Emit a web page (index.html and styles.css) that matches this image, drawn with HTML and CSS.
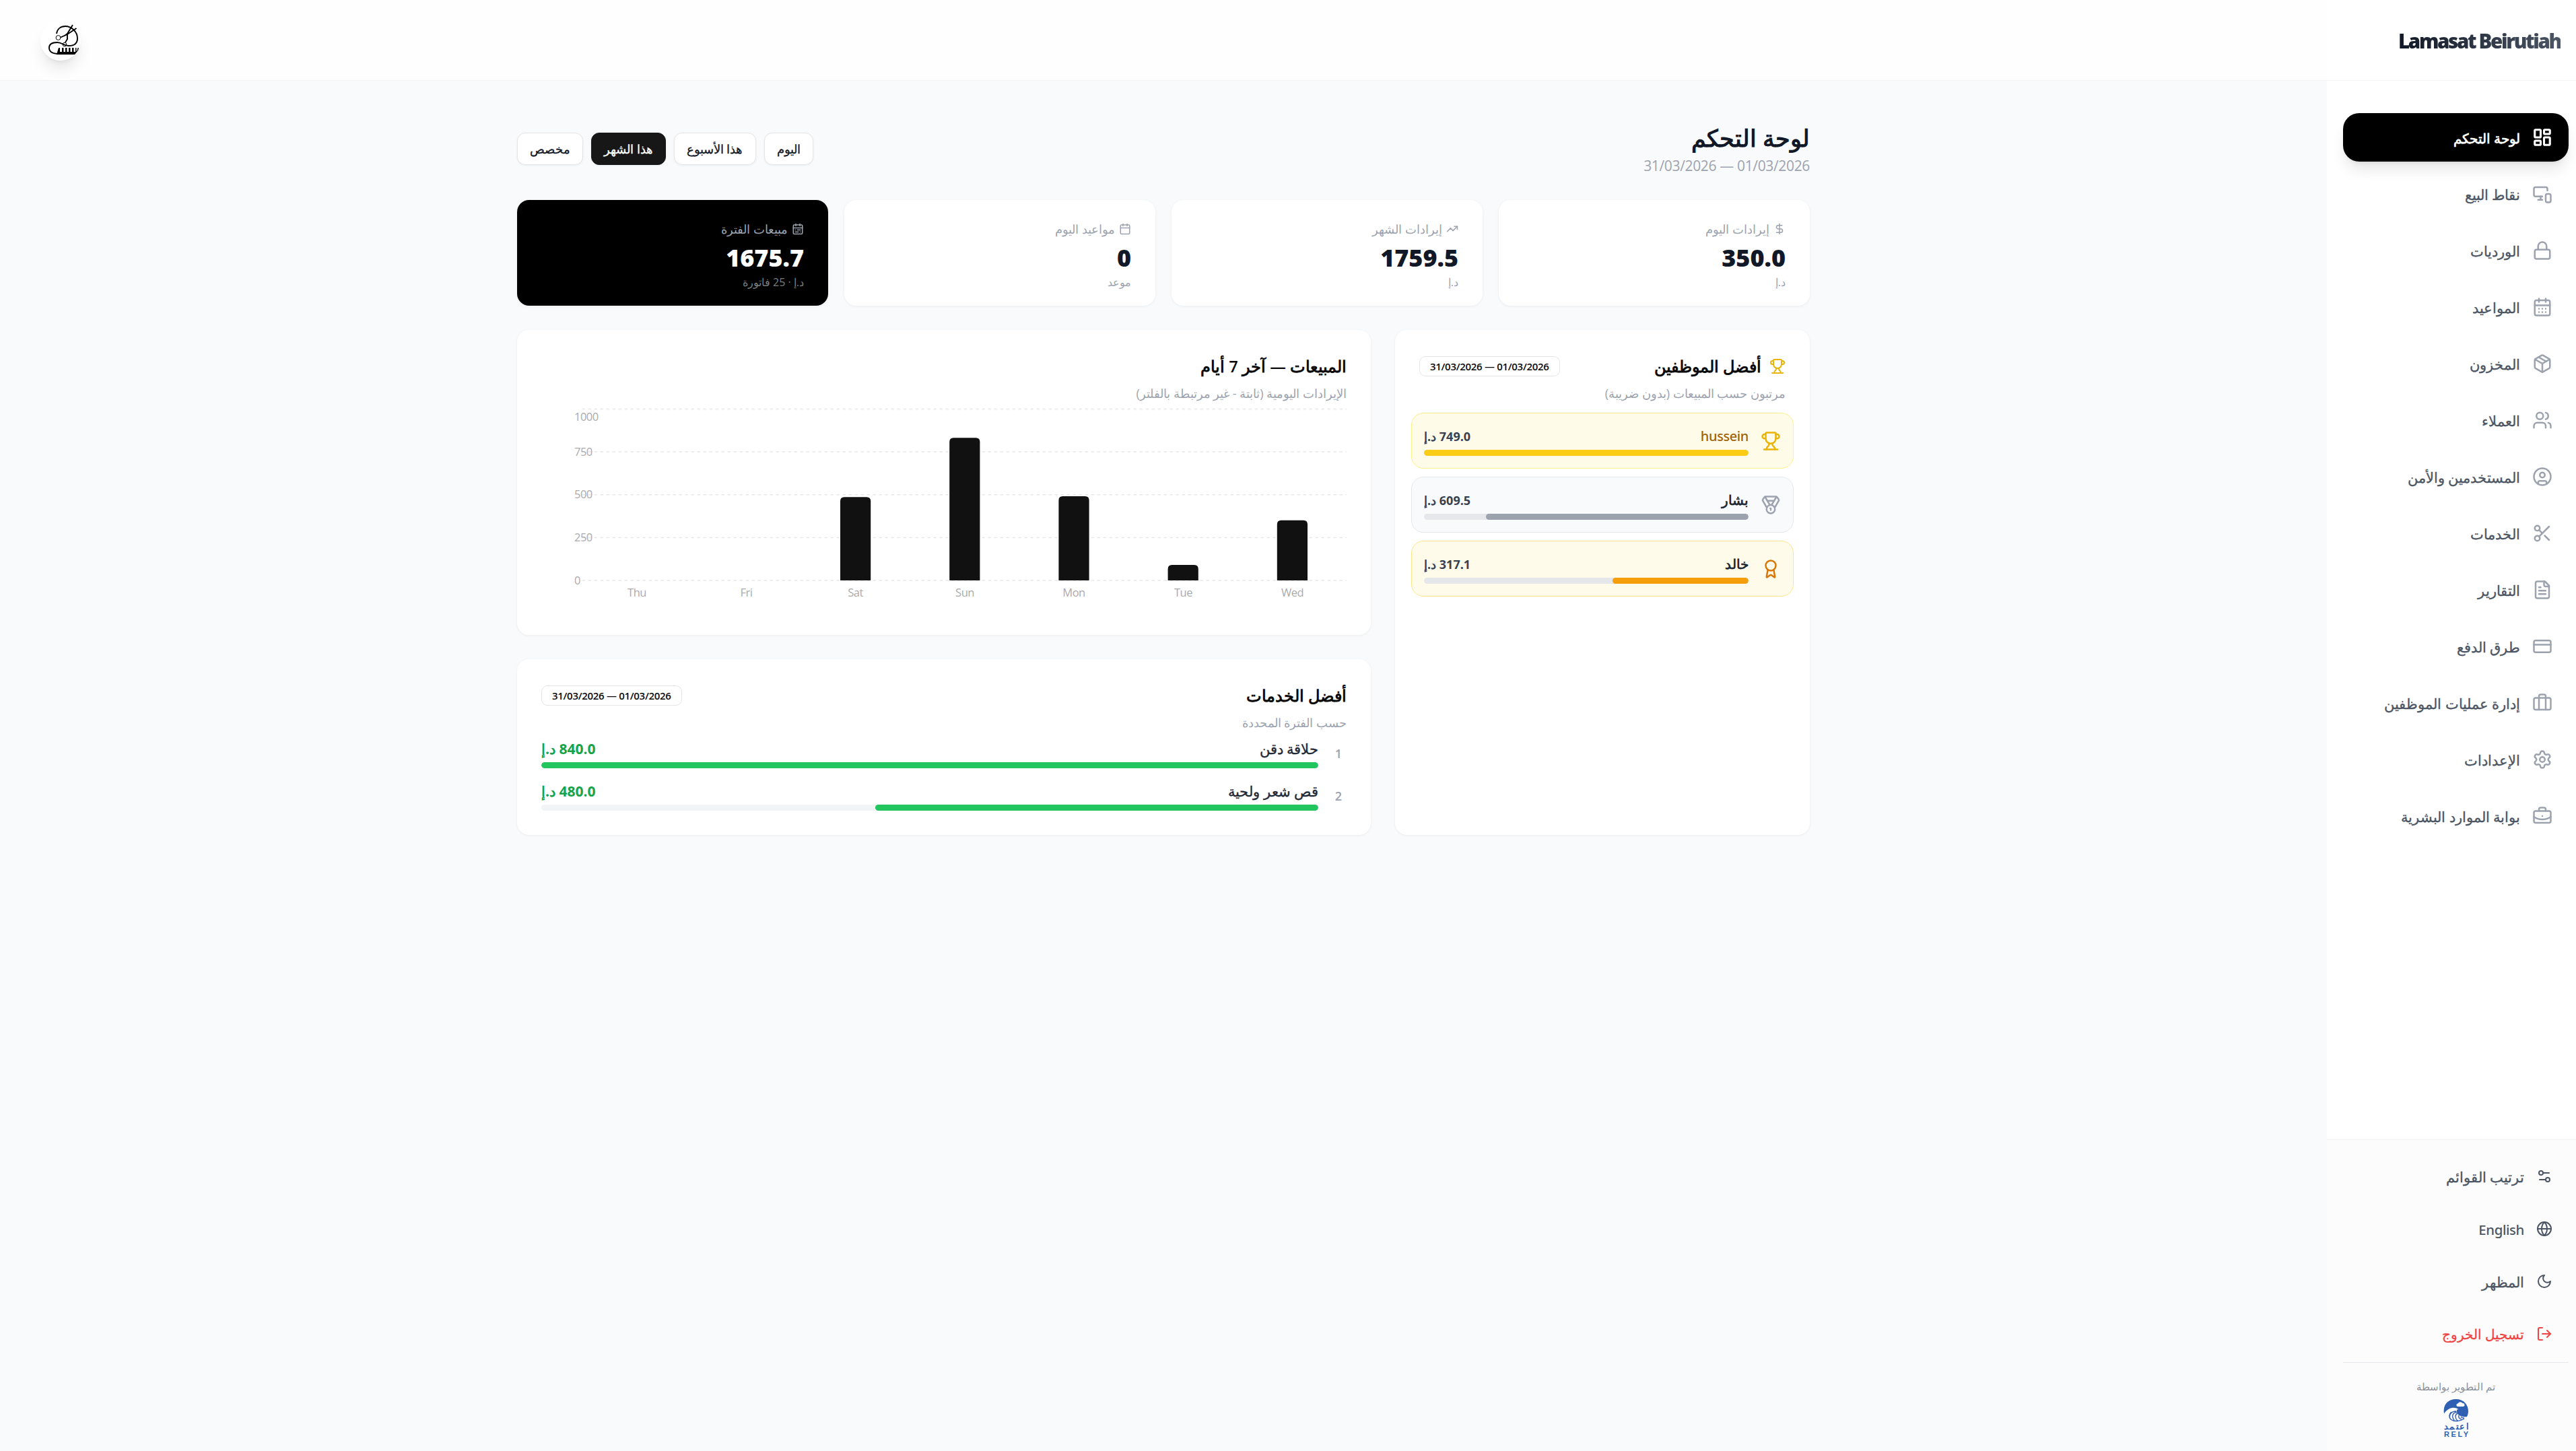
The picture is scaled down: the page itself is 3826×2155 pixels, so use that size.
FILE: index.html
```html
<!DOCTYPE html>
<html lang="ar" dir="rtl">
<head>
    <meta charset="UTF-8">
    <meta name="viewport" content="width=device-width, initial-scale=1.0">
    <title>Lamasat Beirutiah</title>
    <link rel="stylesheet" href="styles.css">
</head>
<body>
    <aside class="sidebar">
        <div class="brand"><span class="brand-name" dir="ltr">Lamasat Beirutiah</span></div>

        <nav class="nav">
            <a class="nav-item active">
                <svg class="icon" viewBox="0 0 24 24"><rect width="7" height="9" x="3" y="3" rx="1"/><rect width="7" height="5" x="14" y="3" rx="1"/><rect width="7" height="9" x="14" y="12" rx="1"/><rect width="7" height="5" x="3" y="16" rx="1"/></svg>
                <span>لوحة التحكم</span>
            </a>
            <a class="nav-item">
                <svg class="icon" viewBox="0 0 24 24"><path d="M18 8V6a2 2 0 0 0-2-2H4a2 2 0 0 0-2 2v7a2 2 0 0 0 2 2h8"/><path d="M10 19v-3.96 3.15"/><path d="M7 19h5"/><rect width="6" height="10" x="16" y="12" rx="2"/></svg>
                <span>نقاط البيع</span>
            </a>
            <a class="nav-item">
                <svg class="icon" viewBox="0 0 24 24"><rect width="18" height="11" x="3" y="11" rx="2"/><path d="M7 11V7a5 5 0 0 1 10 0v4"/></svg>
                <span>الورديات</span>
            </a>
            <a class="nav-item">
                <svg class="icon" viewBox="0 0 24 24"><path d="M8 2v4M16 2v4"/><rect width="18" height="18" x="3" y="4" rx="2"/><path d="M3 10h18M8 14h.01M12 14h.01M16 14h.01M8 18h.01M12 18h.01M16 18h.01"/></svg>
                <span>المواعيد</span>
            </a>
            <a class="nav-item">
                <svg class="icon" viewBox="0 0 24 24"><path d="M11 21.73a2 2 0 0 0 2 0l7-4A2 2 0 0 0 21 16V8a2 2 0 0 0-1-1.73l-7-4a2 2 0 0 0-2 0l-7 4A2 2 0 0 0 3 8v8a2 2 0 0 0 1 1.73z"/><path d="M12 22V12"/><path d="M3.29 7 12 12l8.71-5"/><path d="m7.5 4.27 9 5.15"/></svg>
                <span>المخزون</span>
            </a>
            <a class="nav-item">
                <svg class="icon" viewBox="0 0 24 24"><path d="M16 21v-2a4 4 0 0 0-4-4H6a4 4 0 0 0-4 4v2"/><circle cx="9" cy="7" r="4"/><path d="M22 21v-2a4 4 0 0 0-3-3.87"/><path d="M16 3.13a4 4 0 0 1 0 7.75"/></svg>
                <span>العملاء</span>
            </a>
            <a class="nav-item">
                <svg class="icon" viewBox="0 0 24 24"><circle cx="12" cy="12" r="10"/><circle cx="12" cy="10" r="3"/><path d="M7 20.662V19a2 2 0 0 1 2-2h6a2 2 0 0 1 2 2v1.662"/></svg>
                <span>المستخدمين والأمن</span>
            </a>
            <a class="nav-item">
                <svg class="icon" viewBox="0 0 24 24"><circle cx="6" cy="6" r="3"/><path d="M8.12 8.12 12 12"/><path d="M20 4 8.12 15.88"/><circle cx="6" cy="18" r="3"/><path d="M14.8 14.8 20 20"/></svg>
                <span>الخدمات</span>
            </a>
            <a class="nav-item">
                <svg class="icon" viewBox="0 0 24 24"><path d="M15 2H6a2 2 0 0 0-2 2v16a2 2 0 0 0 2 2h12a2 2 0 0 0 2-2V7Z"/><path d="M14 2v4a2 2 0 0 0 2 2h4"/><path d="M10 9H8M16 13H8M16 17H8"/></svg>
                <span>التقارير</span>
            </a>
            <a class="nav-item">
                <svg class="icon" viewBox="0 0 24 24"><rect width="20" height="14" x="2" y="5" rx="2"/><path d="M2 10h20"/></svg>
                <span>طرق الدفع</span>
            </a>
            <a class="nav-item">
                <svg class="icon" viewBox="0 0 24 24"><path d="M16 20V4a2 2 0 0 0-2-2h-4a2 2 0 0 0-2 2v16"/><rect width="20" height="14" x="2" y="6" rx="2"/></svg>
                <span>إدارة عمليات الموظفين</span>
            </a>
            <a class="nav-item">
                <svg class="icon" viewBox="0 0 24 24"><path d="M9.671 4.136a2.34 2.34 0 0 1 4.659 0 2.34 2.34 0 0 0 3.319 1.915 2.34 2.34 0 0 1 2.33 4.033 2.34 2.34 0 0 0 0 3.831 2.34 2.34 0 0 1-2.33 4.033 2.34 2.34 0 0 0-3.319 1.915 2.34 2.34 0 0 1-4.659 0 2.34 2.34 0 0 0-3.32-1.915 2.34 2.34 0 0 1-2.33-4.033 2.34 2.34 0 0 0 0-3.831A2.34 2.34 0 0 1 6.35 6.051a2.34 2.34 0 0 0 3.319-1.915"/><circle cx="12" cy="12" r="3"/></svg>
                <span>الإعدادات</span>
            </a>
            <a class="nav-item">
                <svg class="icon" viewBox="0 0 24 24"><path d="M12 12h.01"/><path d="M16 6V4a2 2 0 0 0-2-2h-4a2 2 0 0 0-2 2v2"/><path d="M22 13a18.15 18.15 0 0 1-20 0"/><rect width="20" height="14" x="2" y="6" rx="2"/></svg>
                <span>بوابة الموارد البشرية</span>
            </a>
        </nav>

        <div class="sidebar-footer">
            <a class="footer-item">
                <svg class="icon" viewBox="0 0 24 24"><path d="M14 17H5"/><path d="M19 7h-9"/><circle cx="17" cy="17" r="3"/><circle cx="7" cy="7" r="3"/></svg>
                <span>ترتيب القوائم</span>
            </a>
            <a class="footer-item">
                <svg class="icon" viewBox="0 0 24 24"><circle cx="12" cy="12" r="10"/><path d="M12 2a14.5 14.5 0 0 0 0 20 14.5 14.5 0 0 0 0-20"/><path d="M2 12h20"/></svg>
                <span class="latin">English</span>
            </a>
            <a class="footer-item">
                <svg class="icon" viewBox="0 0 24 24"><path d="M12 3a6 6 0 0 0 9 9 9 9 0 1 1-9-9Z"/></svg>
                <span>المظهر</span>
            </a>
            <a class="footer-item logout">
                <svg class="icon" viewBox="0 0 24 24"><path d="M9 21H5a2 2 0 0 1-2-2V5a2 2 0 0 1 2-2h4"/><path d="m16 17 5-5-5-5"/><path d="M21 12H9"/></svg>
                <span>تسجيل الخروج</span>
            </a>
            <div class="credit">
                <span>تم التطوير بواسطة</span>
                <svg class="rely" viewBox="0 0 40 58">
                    <path d="M2 22.500C0 8 9 1 20 1s18 8 18 18c0 3-1 6-2 8-8 1-16-2-15-10 0 0 1-1 3-.5-4-4-15-5-22 6z"/>
                    <path class="cloud" d="M22 12a2.300 2.300 0 0 1 .5-4.500 4 4 0 0 1 7-.500 2.500 2.500 0 0 1 1 5z"/>
                    <path class="wave" d="M20 19c-8 0-11 6-9 11M22 20c-8 1-9 7-5 12M22 22c-4 2-4 7 0 11M24 25c-1 3 1 5 4 6M27 27c1 2 3 2 5 2M13 20c-4 3-4 8-1 11 5 4 14 3 20-1"/>
                    <text x="20" y="45.500" textLength="37">اعتمد</text>
                    <text class="en" x="20" y="57" textLength="36" direction="ltr">RELY</text>
                </svg>
            </div>
        </div>
    </aside>

    <div class="page">
        <header class="topbar">
            <div class="logo">
                <svg viewBox="0 0 60 60">
                    <path class="line" d="M28 50c-9 0-15-3-15-9s6-8 12-8c7 0 10 5 17 5 10 0 13-5 13-11C55 17 46 9 37 9c-7 0-12 4-13 11"/>
                    <path class="line" d="M48 7 40 20l-4 3M53.500 12 40 21l-10 4.500M40 20v8l-3 5"/>
                    <circle class="thin" cx="26.500" cy="26" r="3.400"/>
                    <circle class="thin" cx="36" cy="36" r="2.800"/>
                    <path d="M27 41h2v6h3v-6h2.500v6H37v-6h2.500v6H42v-6h2.500v6H47v-6h2.500v6H52v-6h1.500v5l1-.5 1-4.500H57l-1 4-5 6H24z"/>
                </svg>
            </div>
        </header>

        <main class="content">
            <div class="page-head">
                <div>
                    <h1>لوحة التحكم</h1>
                    <p class="period">01/03/2026 — 31/03/2026</p>
                </div>
                <div class="filters">
                    <button class="filter">اليوم</button>
                    <button class="filter">هذا الأسبوع</button>
                    <button class="filter selected">هذا الشهر</button>
                    <button class="filter">مخصص</button>
                </div>
            </div>

            <div class="stats">
                <div class="card stat">
                    <div class="stat-label">
                        <svg class="icon" viewBox="0 0 24 24"><path d="M12 2v20"/><path d="M17 5H9.500a3.500 3.500 0 0 0 0 7h5a3.500 3.500 0 0 1 0 7H6"/></svg>
                        <span>إيرادات اليوم</span>
                    </div>
                    <div class="stat-value">350.0</div>
                    <div class="stat-unit">د.إ</div>
                </div>
                <div class="card stat">
                    <div class="stat-label">
                        <svg class="icon" viewBox="0 0 24 24"><path d="M16 7h6v6"/><path d="m22 7-8.500 8.500-5-5L2 17"/></svg>
                        <span>إيرادات الشهر</span>
                    </div>
                    <div class="stat-value">1759.5</div>
                    <div class="stat-unit">د.إ</div>
                </div>
                <div class="card stat">
                    <div class="stat-label">
                        <svg class="icon" viewBox="0 0 24 24"><path d="M8 2v4M16 2v4"/><rect width="18" height="18" x="3" y="4" rx="2"/><path d="M3 10h18"/></svg>
                        <span>مواعيد اليوم</span>
                    </div>
                    <div class="stat-value">0</div>
                    <div class="stat-unit">موعد</div>
                </div>
                <div class="card stat dark">
                    <div class="stat-label">
                        <svg class="icon" viewBox="0 0 24 24"><path d="M8 2v4M16 2v4"/><rect width="18" height="18" x="3" y="4" rx="2"/><path d="M3 10h18M17 14h-6M13 18H7M7 14h.01M17 18h.01"/></svg>
                        <span>مبيعات الفترة</span>
                    </div>
                    <div class="stat-value">1675.7</div>
                    <div class="stat-unit">د.إ · 25 فاتورة</div>
                </div>
            </div>

            <div class="panels">
                <section class="card employees">
                    <div class="card-head">
                        <h2>
                            <svg class="icon" viewBox="0 0 24 24"><path d="M10 14.660v1.626a2 2 0 0 1-.976 1.696A5 5 0 0 0 7 21.978"/><path d="M14 14.660v1.626a2 2 0 0 0 .976 1.696A5 5 0 0 1 17 21.978"/><path d="M18 9h1.500a1 1 0 0 0 0-5H18"/><path d="M4 22h16"/><path d="M6 9a6 6 0 0 0 12 0V3a1 1 0 0 0-1-1H7a1 1 0 0 0-1 1z"/><path d="M6 9H4.500a1 1 0 0 1 0-5H6"/></svg>
                            أفضل الموظفين
                        </h2>
                        <span class="badge">01/03/2026 — 31/03/2026</span>
                    </div>
                    <p class="card-desc">مرتبون حسب المبيعات (بدون ضريبة)</p>

                    <div class="ranking">
                        <div class="rank gold">
                            <svg class="icon" viewBox="0 0 24 24"><path d="M10 14.660v1.626a2 2 0 0 1-.976 1.696A5 5 0 0 0 7 21.978"/><path d="M14 14.660v1.626a2 2 0 0 0 .976 1.696A5 5 0 0 1 17 21.978"/><path d="M18 9h1.500a1 1 0 0 0 0-5H18"/><path d="M4 22h16"/><path d="M6 9a6 6 0 0 0 12 0V3a1 1 0 0 0-1-1H7a1 1 0 0 0-1 1z"/><path d="M6 9H4.500a1 1 0 0 1 0-5H6"/></svg>
                            <div class="rank-body">
                                <div class="row"><span class="name latin">hussein</span><span class="amount">749.0 د.إ</span></div>
                                <div class="track"><div class="fill" style="width: 100%"></div></div>
                            </div>
                        </div>
                        <div class="rank silver">
                            <svg class="icon" viewBox="0 0 24 24"><path d="M7.210 15 2.660 7.140a2 2 0 0 1 .13-2.200L4.400 2.800A2 2 0 0 1 6 2h12a2 2 0 0 1 1.600.8l1.600 2.140a2 2 0 0 1 .14 2.200L16.790 15"/><path d="M11 12 5.120 2.200"/><path d="m13 12 5.880-9.800"/><path d="M8 7h8"/><circle cx="12" cy="17" r="5"/><path d="M12 18v-2h-.5"/></svg>
                            <div class="rank-body">
                                <div class="row"><span class="name">بشار</span><span class="amount">609.5 د.إ</span></div>
                                <div class="track"><div class="fill" style="width: 81%"></div></div>
                            </div>
                        </div>
                        <div class="rank bronze">
                            <svg class="icon" viewBox="0 0 24 24"><path d="m15.477 12.890 1.515 8.526a.5.5 0 0 1-.81.470l-3.580-2.687a1 1 0 0 0-1.197 0l-3.586 2.686a.5.5 0 0 1-.81-.469l1.514-8.526"/><circle cx="12" cy="8" r="6"/></svg>
                            <div class="rank-body">
                                <div class="row"><span class="name">خالد</span><span class="amount">317.1 د.إ</span></div>
                                <div class="track"><div class="fill" style="width: 42%"></div></div>
                            </div>
                        </div>
                    </div>
                </section>

                <div class="column">
                    <section class="card sales">
                        <div class="card-head"><h2>المبيعات — آخر 7 أيام</h2></div>
                        <p class="card-desc">الإيرادات اليومية (ثابتة - غير مرتبطة بالفلتر)</p>
                        <svg class="chart" viewBox="0 0 1196 300" direction="ltr">
                            <g class="grid">
                                <path d="M60.500 7.500H1196"/>
                                <path d="M60.500 71.100H1196"/>
                                <path d="M60.500 134.750H1196"/>
                                <path d="M60.500 198.400H1196"/>
                                <path d="M60.500 262H1196"/>
                            </g>
                            <g class="y-labels">
                                <text x="49" y="25">1000</text>
                                <text x="49" y="77">750</text>
                                <text x="49" y="140">500</text>
                                <text x="49" y="204">250</text>
                                <text x="49" y="268">0</text>
                            </g>
                            <g class="bars">
                                <path d="M444 262V144.300q0-6 6-6h33.200q6 0 6 6V262z"/>
                                <path d="M606.200 262V56.300q0-6 6-6h33.200q6 0 6 6V262z"/>
                                <path d="M768.400 262V143q0-6 6-6h33.200q6 0 6 6V262z"/>
                                <path d="M930.600 262V245q0-6 6-6h33.200q6 0 6 6V262z"/>
                                <path d="M1092.800 262V178.700q0-6 6-6h33.200q6 0 6 6V262z"/>
                            </g>
                            <g class="x-labels">
                                <text x="142" y="286">Thu</text>
                                <text x="304.500" y="286">Fri</text>
                                <text x="466.500" y="286">Sat</text>
                                <text x="629" y="286">Sun</text>
                                <text x="791" y="286">Mon</text>
                                <text x="953.500" y="286">Tue</text>
                                <text x="1115.500" y="286">Wed</text>
                            </g>
                        </svg>
                    </section>

                    <section class="card services">
                        <div class="card-head">
                            <h2>أفضل الخدمات</h2>
                            <span class="badge">01/03/2026 — 31/03/2026</span>
                        </div>
                        <p class="card-desc">حسب الفترة المحددة</p>
                        <div class="service">
                            <span class="num">1</span>
                            <div class="service-body">
                                <div class="row"><span class="name">حلاقة دقن</span><span class="amount">840.0 د.إ</span></div>
                                <div class="track"><div class="fill" style="width: 100%"></div></div>
                            </div>
                        </div>
                        <div class="service">
                            <span class="num">2</span>
                            <div class="service-body">
                                <div class="row"><span class="name">قص شعر ولحية</span><span class="amount">480.0 د.إ</span></div>
                                <div class="track"><div class="fill" style="width: 57%"></div></div>
                            </div>
                        </div>
                    </section>
                </div>
            </div>
        </main>
    </div>
</body>
</html>
```
FILE: styles.css
```css
* {
    box-sizing: border-box;
}
body {
    margin: 0;
    display: flex;
    height: 2155px;
    overflow: hidden;
    background: #f9fafb;
    color: #111827;
    font-family: "Open Sans", sans-serif;
    font-size: 21px;
    line-height: 30px;
}
h1, h2, p {
    margin: 0;
}
.icon {
    flex-shrink: 0;
    width: 30px;
    height: 30px;
    fill: none;
    stroke: currentColor;
    stroke-width: 2;
    stroke-linecap: round;
    stroke-linejoin: round;
}
.latin {
    font-family: "Noto Sans", sans-serif;
    font-size: 20px;
    letter-spacing: -0.4px;
}

/* Sidebar */
.sidebar {
    display: flex;
    flex-direction: column;
    flex-shrink: 0;
    width: 370px;
    background: #fff;
}
.brand {
    display: flex;
    align-items: center;
    height: 120px;
    padding: 2px 23px 0 0;
    border-bottom: 1px solid #f3f4f6;
}
.brand-name {
    font-size: 29.5px;
    font-weight: 800;
    line-height: 42px;
    letter-spacing: -2.35px;
    white-space: nowrap;
    background: linear-gradient(to right, #111827, #4b5563);
    -webkit-background-clip: text;
    background-clip: text;
    color: transparent;
}
.nav {
    display: flex;
    flex-direction: column;
    flex: 1;
    gap: 12px;
    padding: 48px 11px 0 24px;
}
.nav-item, .footer-item {
    display: flex;
    align-items: center;
    gap: 18px;
    height: 72px;
    padding: 0 24px;
    border-radius: 24px;
    color: #4b5563;
    font-size: 20.5px;
    font-weight: 500;
}
.nav-item span, .footer-item span {
    padding-top: 2px;
    -webkit-text-stroke: 0.35px currentColor;
}
.footer-item .latin {
    font-size: 20.4px;
    -webkit-text-stroke: 0;
}
.nav-item .icon {
    color: #9ca3af;
}
.nav-item.active {
    background: #000;
    color: #fff;
    font-size: 20.2px;
    font-weight: 700;
    box-shadow: 0 15px 22px -4px rgba(0, 0, 0, 0.1), 0 6px 9px -6px rgba(0, 0, 0, 0.1);
}
.nav-item.active span {
    -webkit-text-stroke: 0;
}
.nav-item.active .icon {
    color: #fff;
    stroke-width: 2.5;
}
.sidebar-footer {
    display: flex;
    flex-direction: column;
    gap: 6px;
    height: 463px;
    padding: 18px 11px 0 24px;
    border-top: 1px solid #f3f4f6;
    background: #fcfcfc;
}
.footer-item .icon {
    width: 24px;
    height: 24px;
}
.footer-item.logout {
    color: #ef4444;
    font-size: 19.6px;
}
.credit {
    display: flex;
    flex-direction: column;
    align-items: center;
    padding-top: 20px;
    border-top: 1px solid #e5e7eb;
    color: #8b8f98;
    font-size: 15px;
}
.rely {
    width: 40px;
    height: 58px;
    margin-top: 3px;
    fill: #2f5fb3;
}
.rely .cloud {
    fill: #fcfcfc;
}
.rely .wave {
    fill: none;
    stroke: #2f5fb3;
    stroke-width: 1.4;
}
.rely text {
    font-size: 13px;
    font-weight: 700;
    text-anchor: middle;
}
.rely .en {
    font-family: "Liberation Sans", sans-serif;
    font-size: 11px;
}

/* Top bar */
.page {
    flex: 1;
    display: flex;
    flex-direction: column;
}
.topbar {
    display: flex;
    justify-content: flex-end;
    align-items: center;
    height: 120px;
    padding: 0 60px;
    border-bottom: 1px solid #f3f4f6;
    background: #fefefe;
}
.logo {
    width: 60px;
    height: 60px;
    border-radius: 50%;
    background: #fff;
    box-shadow: 0 15px 22px -4px rgba(0, 0, 0, 0.1), 0 6px 9px -6px rgba(0, 0, 0, 0.1);
}
.logo .line {
    fill: none;
    stroke: #000;
    stroke-width: 1.9;
}
.logo .thin {
    fill: none;
    stroke: #000;
    stroke-width: 1;
}

/* Content */
.content {
    width: 1920px;
    margin: 0 auto;
    padding-top: 60px;
}
.page-head {
    display: flex;
    justify-content: space-between;
    align-items: center;
    height: 81px;
    margin-bottom: 36px;
}
.page-head h1 {
    font-size: 34.5px;
    font-weight: 700;
    line-height: 48px;
}
.period {
    padding-top: 2px;
    color: #9ca3af;
    letter-spacing: -0.35px;
}
.filters {
    display: flex;
    gap: 12px;
}
.filter {
    height: 48px;
    padding: 0 18px;
    border: 1px solid #e5e5e5;
    border-radius: 12px;
    background: #fff;
    color: #111827;
    font: 500 18.3px "Open Sans", sans-serif;
    -webkit-text-stroke: 0.3px currentColor;
    box-shadow: 0 1px 3px rgba(0, 0, 0, 0.06);
}
.filter.selected {
    border-color: #171717;
    background: #171717;
    color: #fff;
}
.card {
    border-radius: 18px;
    background: #fff;
    box-shadow: 0 1px 4px rgba(0, 0, 0, 0.06);
}
.stats {
    display: grid;
    grid-template-columns: repeat(4, 1fr);
    gap: 24px;
    margin-bottom: 36px;
}
.stat {
    height: 157px;
    padding: 30px 36px 0;
}
.stat-label {
    display: flex;
    align-items: center;
    gap: 6px;
    height: 26px;
    color: #9ca3af;
    font-size: 17.5px;
}
.stat-label .icon {
    width: 18px;
    height: 18px;
}
.stat-value {
    margin-top: 6px;
    font-size: 36px;
    font-weight: 800;
    line-height: 48px;
}
.stat-unit {
    color: #9ca3af;
    font-size: 16px;
    line-height: 24px;
}
.stat.dark {
    background: #000;
}
.dark .stat-value {
    color: #fff;
}
.dark .stat-unit {
    color: #7d7d7d;
}

/* Panels */
.panels {
    display: grid;
    grid-template-columns: 616px 1268px;
    gap: 36px;
}
.column {
    display: flex;
    flex-direction: column;
    gap: 36px;
}
.card-head {
    display: flex;
    justify-content: space-between;
    align-items: center;
    height: 36px;
}
.card-head h2 {
    display: flex;
    align-items: center;
    gap: 12px;
    color: #0a0a0a;
    font-size: 23.7px;
    font-weight: 600;
}
.card-head .icon {
    width: 24px;
    height: 24px;
    color: #eab308;
}
.badge {
    height: 30px;
    padding: 0 15px;
    border: 1px solid #e5e5e5;
    border-radius: 9px;
    color: #0a0a0a;
    font-size: 15px;
    font-weight: 600;
    line-height: 28px;
    letter-spacing: -0.3px;
}
.card-desc {
    margin-top: 9px;
    color: #9ca3af;
    font-size: 18px;
    line-height: 27px;
}
.row {
    display: flex;
    justify-content: space-between;
    align-items: center;
    height: 36px;
    padding-bottom: 4px;
    color: #1f2937;
}
.track {
    height: 9px;
    border-radius: 5px;
    background: #e5e7eb;
    overflow: hidden;
}
.fill {
    height: 100%;
    border-radius: 5px;
}
.employees {
    height: 750px;
    padding: 36px 24px 0;
}
.employees .card-head {
    padding: 0 12px;
}
.employees .card-desc {
    padding: 0 12px;
}
.ranking {
    display: flex;
    flex-direction: column;
    gap: 12px;
    margin-top: 15px;
}
.rank {
    display: flex;
    align-items: center;
    gap: 18px;
    height: 83px;
    padding: 0 18px;
    border: 1px solid;
    border-radius: 18px;
}
.rank-body {
    flex: 1;
}
.rank .name {
    font-size: 20px;
    font-weight: 600;
}
.rank .name.latin {
    font-size: 20px;
    font-weight: 500;
}
.rank .amount {
    color: #374151;
    font-size: 18px;
    font-weight: 700;
}
.gold {
    border-color: #fef08a;
    background: #fefce8;
    color: #eab308;
}
.gold .name {
    color: #a16207;
}
.gold .fill {
    background: #facc15;
}
.silver {
    border-color: #e5e7eb;
    background: #f9fafb;
    color: #9ca3af;
}
.silver .fill {
    background: #9ca3af;
}
.bronze {
    border-color: #fde68a;
    background: #fffbeb;
    color: #d97706;
}
.bronze .fill {
    background: #f59e0b;
}

/* Sales chart */
.sales {
    height: 453px;
    padding: 36px 36px 0;
}
.chart {
    display: block;
    width: 1196px;
    height: 300px;
    margin-top: 2px;
}
.grid path {
    stroke: #e8e8e8;
    stroke-width: 1.5;
    stroke-dasharray: 4.5 4.5;
}
.y-labels text, .x-labels text {
    fill: #aaa;
    font-size: 16.5px;
    letter-spacing: -0.5px;
}
.x-labels text {
    text-anchor: middle;
}
.bars path {
    fill: #111;
}

/* Services */
.services {
    height: 261px;
    padding: 36px 36px 0;
}
.service {
    display: flex;
    align-items: center;
    gap: 18px;
    height: 63px;
}
.num {
    width: 24px;
    color: #9ca3af;
    font-size: 18px;
    font-weight: 600;
    text-align: center;
}
.service-body {
    flex: 1;
}
.service .name {
    font-weight: 500;
    -webkit-text-stroke: 0.4px currentColor;
}
.service .amount {
    color: #16a34a;
    font-weight: 700;
}
.service .track {
    background: #f3f4f6;
}
.service .fill {
    background: #22c55e;
}
```
